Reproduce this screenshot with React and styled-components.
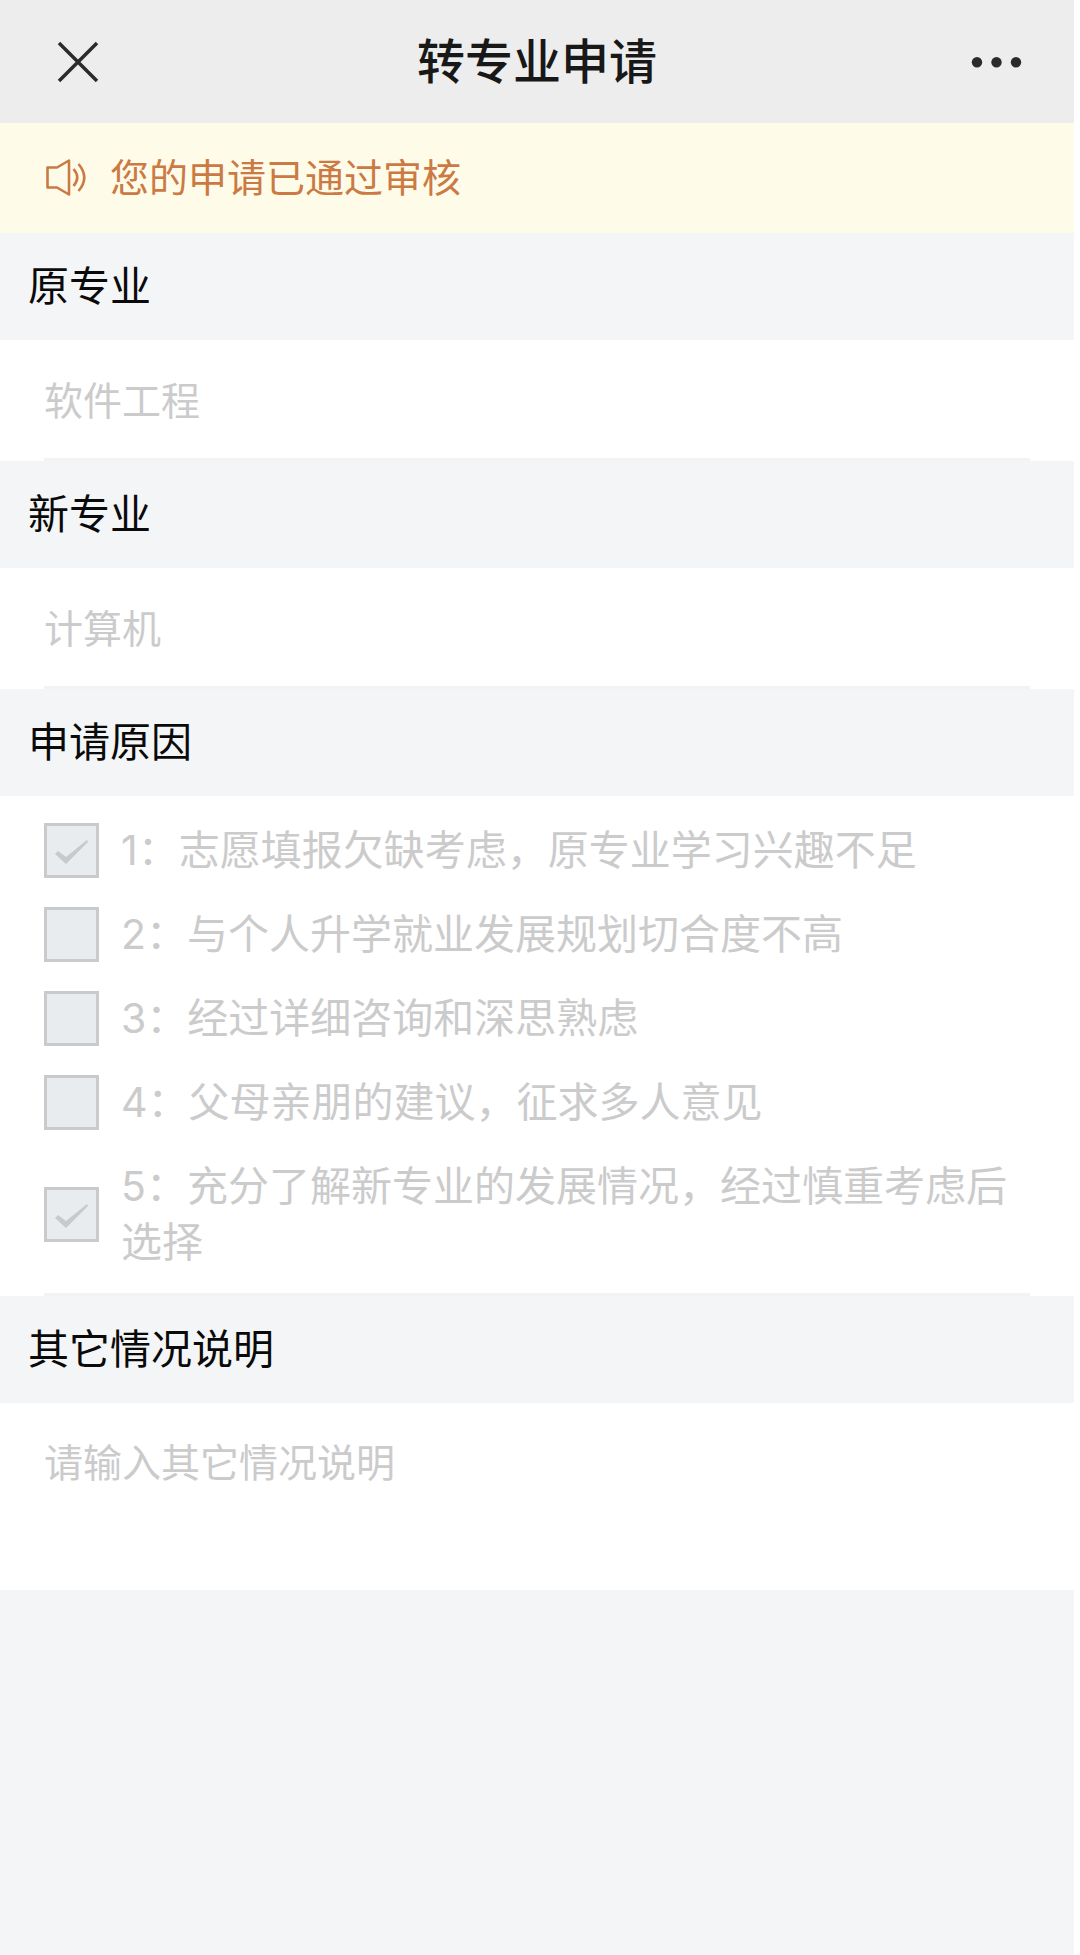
import React from "react";
import styled, { createGlobalStyle } from "styled-components";

const GlobalStyle = createGlobalStyle`
  * {
    box-sizing: border-box;
  }
  body {
    margin: 0;
    background-color: #fff;
    font-family: Inter, "Noto Sans CJK SC", sans-serif;
  }
`;

const Page = styled.div`
  display: flex;
  flex-direction: column;
  min-height: 100vh;
  margin-right: 6px;
  background-color: #f3f5f7;
`;

const NavBar = styled.header`
  display: flex;
  align-items: center;
  justify-content: space-between;
  padding: 32px 48px 31px;
  background-color: #ededed;
`;

const NavTitle = styled.h1`
  margin: 0;
  font-size: 48px;
  font-weight: 500;
  line-height: 60px;
  color: #181818;
`;

const IconButton = styled.button`
  display: flex;
  padding: 0;
  border: none;
  background: none;
  color: #2b2b2b;
  cursor: pointer;
`;

const NoticeBar = styled.div`
  display: flex;
  align-items: center;
  gap: 22px;
  padding: 27px 44px;
  background-color: #fffbe9;
  color: #ca7a42;
  font-size: 39px;
  line-height: 56px;
`;

const SectionTitle = styled.h2`
  margin: 0;
  padding: 25px 28px 26px;
  font-size: 41px;
  font-weight: 400;
  line-height: 56px;
  color: #0a0a0a;
`;

const Panel = styled.div`
  background-color: #fff;
`;

const Field = styled.div`
  margin: 0 44px;
  border-bottom: 3px solid #f3f3f4;
`;

const TextInput = styled.input`
  display: block;
  width: 100%;
  height: 118px;
  padding: 30px 0 32px;
  border: none;
  background: none;
  font-family: inherit;
  font-size: 39px;
  line-height: 56px;
  color: #cbcbcc;
`;

const TextArea = styled.textarea`
  display: block;
  width: 100%;
  height: 187px;
  padding: 32px 44px;
  border: none;
  background: none;
  resize: none;
  font-family: inherit;
  font-size: 39px;
  line-height: 56px;
  &::placeholder {
    color: #cbcbcc;
  }
`;

const OptionList = styled.div`
  margin: 0 44px;
  padding: 12px 0 9px;
  border-bottom: 3px solid #f3f3f4;
`;

const Option = styled.label`
  display: flex;
  align-items: center;
  gap: 22px;
  padding: 14px 0;
  font-size: 41px;
  line-height: 56px;
  color: #cbcbcc;
`;

const CheckBox = styled.span`
  position: relative;
  flex: none;
  width: 55px;
  height: 55px;
  svg {
    position: absolute;
    inset: 0;
  }
`;

const CheckInput = styled.input`
  display: block;
  width: 100%;
  height: 100%;
  margin: 0;
  appearance: none;
  border: 3px solid #c9cacb;
  background-color: #e9ecef;
`;

const reasons = [
  { text: "1：志愿填报欠缺考虑，原专业学习兴趣不足", checked: true },
  { text: "2：与个人升学就业发展规划切合度不高", checked: false },
  { text: "3：经过详细咨询和深思熟虑", checked: false },
  { text: "4：父母亲朋的建议，征求多人意见", checked: false },
  { text: "5：充分了解新专业的发展情况，经过慎重考虑后选择", checked: true },
];

const CloseIcon = () => (
  <svg width="60" height="60" viewBox="0 0 60 60" fill="none" stroke="currentColor" strokeWidth="3.5">
    <path d="M11 11 49 49M49 11 11 49" />
  </svg>
);

const MoreIcon = () => (
  <svg width="60" height="60" viewBox="0 0 60 60" fill="currentColor">
    <circle cx="11" cy="30.3" r="5.2" />
    <circle cx="30.5" cy="30.3" r="5.2" />
    <circle cx="50" cy="30.3" r="5.2" />
  </svg>
);

const VolumeIcon = () => (
  <svg width="44" height="44" viewBox="0 0 44 44" fill="none" stroke="currentColor" strokeWidth="2.6">
    <path d="M3.5 11.5H13L25 4.5V38.5L13 31.5H3.5Z" strokeLinejoin="round" />
    <path d="M29.5 13Q37 21.5 29.5 30M34.5 8Q46 21.5 34.5 35" />
  </svg>
);

const CheckIcon = () => (
  <svg width="55" height="55" viewBox="0 0 55 55" fill="#c8c9cb">
    <path d="M11 31 14 28 22 34 43 17 44 19 22 41Z" />
  </svg>
);

const ReasonOption = ({ text, checked }) => (
  <Option>
    <CheckBox>
      <CheckInput type="checkbox" defaultChecked={checked} disabled />
      {checked && <CheckIcon />}
    </CheckBox>
    <span>{text}</span>
  </Option>
);

const App = () => {
  return (
    <>
      <GlobalStyle />
      <Page>
        <NavBar>
          <IconButton aria-label="关闭">
            <CloseIcon />
          </IconButton>
          <NavTitle>转专业申请</NavTitle>
          <IconButton aria-label="更多">
            <MoreIcon />
          </IconButton>
        </NavBar>
        <NoticeBar>
          <VolumeIcon />
          <span>您的申请已通过审核</span>
        </NoticeBar>

        <SectionTitle>
          <label htmlFor="oldMajor">原专业</label>
        </SectionTitle>
        <Panel>
          <Field>
            <TextInput id="oldMajor" defaultValue="软件工程" disabled />
          </Field>
        </Panel>

        <SectionTitle>
          <label htmlFor="newMajor">新专业</label>
        </SectionTitle>
        <Panel>
          <Field>
            <TextInput id="newMajor" defaultValue="计算机" disabled />
          </Field>
        </Panel>

        <SectionTitle id="reasonTitle">申请原因</SectionTitle>
        <Panel>
          <OptionList role="group" aria-labelledby="reasonTitle">
            {reasons.map((reason) => (
              <ReasonOption key={reason.text} {...reason} />
            ))}
          </OptionList>
        </Panel>

        <SectionTitle>
          <label htmlFor="remark">其它情况说明</label>
        </SectionTitle>
        <Panel>
          <TextArea id="remark" placeholder="请输入其它情况说明" disabled />
        </Panel>
      </Page>
    </>
  );
};

export default App;
